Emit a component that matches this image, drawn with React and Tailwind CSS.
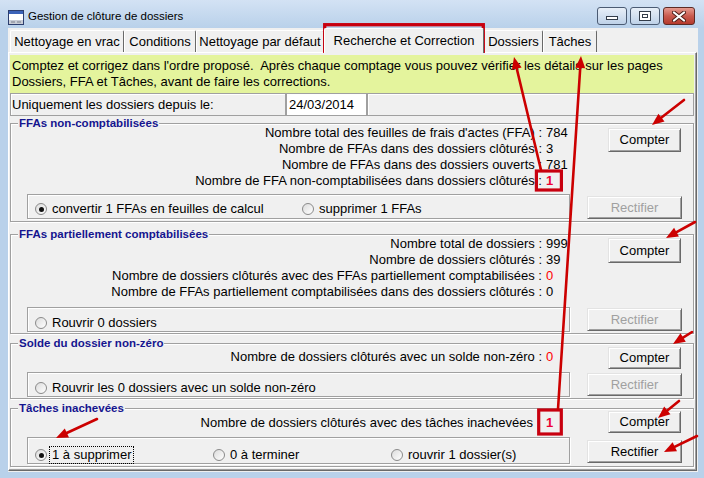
import React from 'react';

const arrows = [
  [541, 170, 514, 57],
  [558, 409, 581, 56],
  [684, 100, 652, 125],
  [695, 222, 666, 238],
  [692, 332, 673, 344],
  [679, 401, 658, 418],
  [697, 436, 664, 452],
  [97, 419, 56, 438],
];

function Arrow({ a }) {
  const [x1, y1, x2, y2] = a;
  const dx = x2 - x1;
  const dy = y2 - y1;
  const len = Math.hypot(dx, dy);
  const ux = dx / len;
  const uy = dy / len;
  const hl = 12;
  const hw = 5;
  const bx = x2 - ux * hl;
  const by = y2 - uy * hl;
  const pts = `${x2},${y2} ${bx - uy * hw},${by + ux * hw} ${bx + uy * hw},${by - ux * hw}`;
  return (
    <g>
      <line x1={x1} y1={y1} x2={bx + ux * 2} y2={by + uy * 2} stroke="#cc0000" strokeWidth="2.6" strokeLinecap="round" />
      <polygon points={pts} fill="#cc0000" />
    </g>
  );
}

function Overlay() {
  return (
    <svg className="pointer-events-none absolute left-0 top-0" width="704" height="478">
      <rect x="324.7" y="24.7" width="158.6" height="26.6" fill="none" stroke="#c8000f" strokeWidth="3.3" />
      <rect x="536.4" y="171" width="25" height="19" fill="none" stroke="#c8000f" strokeWidth="3.2" />
      <rect x="538.7" y="410" width="22.6" height="24" fill="none" stroke="#c8000f" strokeWidth="3.2" />
      {arrows.map((a, i) => (
        <Arrow key={i} a={a} />
      ))}
    </svg>
  );
}

function AppIcon() {
  return (
    <svg width="16" height="15" viewBox="0 0 16 15">
      <rect x="0.5" y="0.5" width="15" height="14" fill="#fff" stroke="#2c3e6e" />
      <rect x="1" y="1" width="14" height="3" fill="#3b63b8" />
      <rect x="1" y="10" width="14" height="4" fill="#c9cdd6" />
      <rect x="3" y="11.5" width="4" height="1" fill="#7a7f8a" />
      <rect x="9" y="11.5" width="4" height="1" fill="#7a7f8a" />
    </svg>
  );
}

function TitleBar() {
  return (
    <div className="flex h-[28px] items-start bg-linear-to-b from-[#d3e2f4] to-[#b9d1ea]">
      <div className="ml-[8px] mt-[10px]">
        <AppIcon />
      </div>
      <span className="ml-[4px] mt-[9px] text-[11.5px] leading-[14px] text-black">Gestion de clôture de dossiers</span>
      <div className="ml-auto mr-[9px] mt-[7px] flex gap-[3px]">
        <div className="flex h-[18px] w-[30px] items-end justify-center rounded-[3px] border border-[#4b5b73] bg-linear-to-b from-[#e8eff8] to-[#bfd2e8] pb-[4px]">
          <div className="h-[4px] w-[12px] border border-[#333c4a] bg-white" />
        </div>
        <div className="flex h-[18px] w-[30px] items-center justify-center rounded-[3px] border border-[#4b5b73] bg-linear-to-b from-[#e8eff8] to-[#bfd2e8]">
          <div className="flex h-[10px] w-[12px] items-center justify-center border border-[#333c4a] bg-white">
            <div className="h-[4px] w-[6px] border border-[#333c4a]" />
          </div>
        </div>
        <div className="flex h-[18px] w-[32px] items-center justify-center rounded-[3px] border border-[#5c2a24] bg-linear-to-b from-[#e59a8f] via-[#c95a4e] to-[#b5392c]">
          <svg width="14" height="11" viewBox="0 0 14 11">
            <path d="M2 1.5 L12 9.5 M12 1.5 L2 9.5" stroke="#4a1d18" strokeWidth="4" strokeLinecap="round" />
            <path d="M2 1.5 L12 9.5 M12 1.5 L2 9.5" stroke="#fff" strokeWidth="2.2" strokeLinecap="round" />
          </svg>
        </div>
      </div>
    </div>
  );
}

function Tab({ w, children }) {
  return (
    <div className={`flex h-[22px] items-center justify-center rounded-t-[2px] border-l border-r border-t border-l-white border-r-[#696969] border-t-white ${w}`}>
      {children}
    </div>
  );
}

function Btn({ children, disabled, className }) {
  return (
    <div
      className={`flex items-center justify-center border border-b-[#696969] border-l-[#e3e3e3] border-r-[#696969] border-t-[#e3e3e3] bg-[#f0f0f0] shadow-[inset_1px_1px_0_#fff,inset_-1px_-1px_0_#a0a0a0] ${
        disabled ? 'text-[#a0a0a0]' : 'text-black'
      } ${className}`}
    >
      {children}
    </div>
  );
}

function Radio({ checked, label, focus, w }) {
  return (
    <div className={`flex items-center ${w}`}>
      <span className="flex h-[12px] w-[12px] items-center justify-center rounded-full border border-[#8a8a8a] bg-linear-to-br from-[#dcdcdc] to-white">
        {checked && <span className="h-[5px] w-[5px] rounded-full bg-[#111]" />}
      </span>
      <span className={`ml-[3px] px-[2px] ${focus ? 'outline-1 outline-dotted outline-black' : ''}`}>{label}</span>
    </div>
  );
}

function Line({ label, value, red, bold, pr }) {
  return (
    <div className="flex h-[16px] items-center whitespace-nowrap">
      <span className={`w-[531px] text-right ${pr || ''}`}>{label}</span>
      <span className={`pl-[4px] ${red ? 'text-[#ff0000]' : ''} ${bold ? 'font-bold text-[#ee0035]' : ''}`}>{value}</span>
    </div>
  );
}

function Group({ title, h, mt, pt, lines, boxMt, boxH, boxPt, radios, cMt, cH, rMt, rEnabled }) {
  return (
    <div className={`relative flex w-[684px] border border-[#a0a0a0] shadow-[inset_1px_1px_0_#fff,1px_1px_0_#fff] ${h} ${mt}`}>
      <span className="absolute left-[7px] top-[-8px] bg-[#f0f0f0] px-[1px] text-[11.5px] font-bold leading-[14px] text-[#15158f]">
        {title}
      </span>
      <div className={`flex w-[576px] flex-col ${pt}`}>
        {lines.map((l, i) => (
          <Line key={i} {...l} />
        ))}
        <div className={`ml-[16px] flex w-[543px] items-start border border-[#a0a0a0] pl-[7px] shadow-[inset_1px_1px_0_#fff,1px_1px_0_#fff] ${boxMt} ${boxH} ${boxPt}`}>
          {radios.map((r, i) => (
            <Radio key={i} {...r} />
          ))}
        </div>
      </div>
      <div className="flex w-[96px] flex-col items-start">
        <Btn className={`ml-[21px] w-[73px] ${cMt} ${cH}`}>Compter</Btn>
        <Btn className={`h-[23px] w-[95px] ${rMt}`} disabled={!rEnabled}>
          Rectifier
        </Btn>
      </div>
    </div>
  );
}

export default function App() {
  return (
    <div className="relative h-[478px] w-[704px] overflow-hidden bg-[#b9d1ea] font-['Liberation_Sans',Arial,sans-serif] text-[13px] leading-[16px] text-black">
      <TitleBar />
      <div className="ml-[8px] mr-[6px] flex h-[444px] flex-col bg-[#f0f0f0]">
        {/* tabs */}
        <div className="flex h-[24px] items-end pl-[2px]">
          <Tab w="w-[114px]">Nettoyage en vrac</Tab>
          <Tab w="w-[72px]">Conditions</Tab>
          <Tab w="w-[128px]">Nettoyage par défaut</Tab>
          <div className="relative z-10 -mb-[1px] flex h-[25px] w-[160px] items-center justify-center rounded-t-[2px] border-l border-r border-t border-l-white border-r-[#696969] border-t-white bg-[#f0f0f0]">
            Recherche et Correction
          </div>
          <Tab w="w-[59px]">Dossiers</Tab>
          <Tab w="w-[54px]">Tâches</Tab>
        </div>

        {/* panel */}
        <div className="h-[419px] w-[689px] border border-b-[#696969] border-l-white border-r-[#696969] border-t-white pl-[1px] pt-[2px] shadow-[inset_-1px_-1px_0_#a0a0a0]">
          <div className="h-[38px] w-[684px] whitespace-nowrap bg-[#e4f49d] px-[2px] pt-[3px]">
            Comptez et corrigez dans l'ordre proposé.{'\u00a0 '}Après chaque comptage vous pouvez vérifier les détails sur les pages
            <br />
            Dossiers, FFA et Tâches, avant de faire les corrections.
          </div>

          <div className="flex h-[23px] w-[684px]">
            <div className="flex w-[276px] items-center border border-[#a0a0a0] px-[1px] shadow-[inset_1px_1px_0_#fff]">
              Uniquement les dossiers depuis le:
            </div>
            <div className="flex w-[81px] items-center border border-[#a0a0a0] bg-white pl-[2px]">24/03/2014</div>
            <div className="flex-1 border border-[#a0a0a0] shadow-[inset_1px_1px_0_#fff]" />
          </div>

          <Group
            title="FFAs non-comptabilisées"
            h="h-[99px]"
            mt="mt-[7px]"
            pt="pt-[1px]"
            lines={[
              { label: "Nombre total des feuilles de frais d'actes (FFA) :", value: '784' },
              { label: 'Nombre de FFAs dans des dossiers clôturés :', value: '3' },
              { label: 'Nombre de FFAs dans des dossiers ouverts :', value: '781' },
              { label: 'Nombre de FFA non-comptabilisées dans dossiers clôturés :', value: '1', bold: true },
            ]}
            boxMt="mt-[5px]"
            boxH="h-[25px]"
            boxPt="pt-[6px]"
            radios={[
              { checked: true, label: 'convertir 1 FFAs en feuilles de calcul', w: 'w-[267px]' },
              { label: 'supprimer 1 FFAs' },
            ]}
            cMt="mt-[4px]"
            cH="h-[24px]"
            rMt="mt-[44px]"
          />

          <Group
            title="FFAs partiellement comptabilisées"
            h="h-[100px]"
            mt="mt-[12px]"
            pt="pt-[1px]"
            lines={[
              { label: 'Nombre total de dossiers :', value: '999' },
              { label: 'Nombre de dossiers clôturés :', value: '39' },
              { label: 'Nombre de dossiers clôturés avec des FFAs partiellement comptabilisées :', value: '0', red: true },
              { label: 'Nombre de FFAs partiellement comptabilisées dans des dossiers clôturés :', value: '0' },
            ]}
            boxMt="mt-[7px]"
            boxH="h-[25px]"
            boxPt="pt-[7px]"
            radios={[{ label: 'Rouvrir 0 dossiers' }]}
            cMt="mt-[3px]"
            cH="h-[25px]"
            rMt="mt-[45px]"
          />

          <Group
            title="Solde du dossier non-zéro"
            h="h-[56px]"
            mt="mt-[9px]"
            pt="pt-[5px]"
            lines={[{ label: 'Nombre de dossiers clôturés avec un solde non-zéro :', value: '0', red: true }]}
            boxMt="mt-[7px]"
            boxH="h-[25px]"
            boxPt="pt-[7px]"
            radios={[{ label: 'Rouvrir les 0 dossiers avec un solde non-zéro' }]}
            cMt="mt-[3px]"
            cH="h-[22px]"
            rMt="mt-[4px]"
          />

          <Group
            title="Tâches inachevées"
            h="h-[59px]"
            mt="mt-[9px]"
            pt="pt-[6px]"
            lines={[{ label: 'Nombre de dossiers clôturés avec des tâches inachevées', value: '1', bold: true, pr: 'pr-[9px]' }]}
            boxMt="mt-[6px]"
            boxH="h-[27px]"
            boxPt="pt-[9px]"
            radios={[
              { checked: true, focus: true, label: '1 à supprimer', w: 'w-[178px]' },
              { label: '0 à terminer', w: 'w-[178px]' },
              { label: 'rouvrir 1 dossier(s)' },
            ]}
            cMt="mt-[2px]"
            cH="h-[22px]"
            rMt="mt-[7px]"
            rEnabled
          />
        </div>
      </div>
      <Overlay />
    </div>
  );
}
